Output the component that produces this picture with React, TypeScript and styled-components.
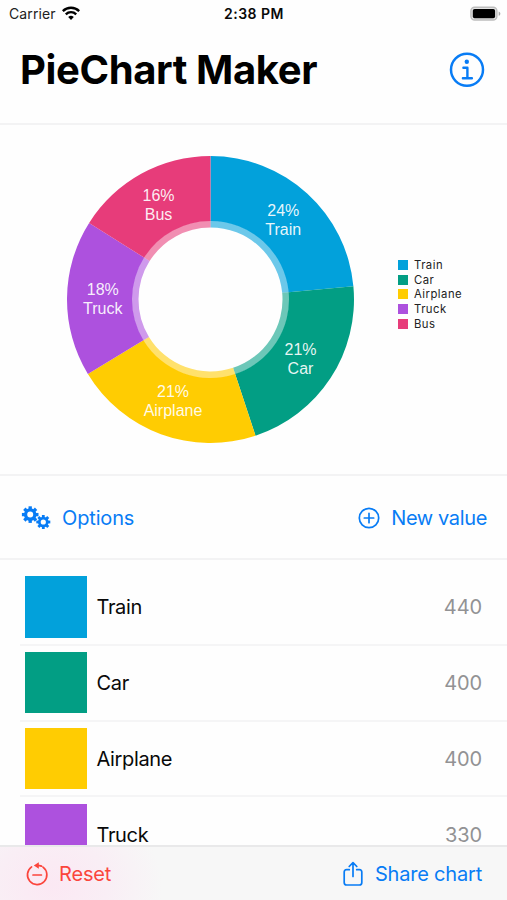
import React from "react";
import styled, { createGlobalStyle } from "styled-components";

const BLUE = "#087cf5";
const RED = "#fb453c";

const entries = [
  { name: "Train", value: 440, color: "#02a1db", tx: 283.3, ty: 216.5 },
  { name: "Car", value: 400, color: "#029e84", tx: 300.5, ty: 355 },
  { name: "Airplane", value: 400, color: "#ffcc02", tx: 173, ty: 397.3 },
  { name: "Truck", value: 330, color: "#ad51de", tx: 102.8, ty: 295 },
  { name: "Bus", value: 300, color: "#e73c7a", tx: 158.5, ty: 201.5 },
];
const total = entries.reduce((sum, e) => sum + e.value, 0);

const GlobalStyle = createGlobalStyle`
  * { box-sizing: border-box; }
  body { margin: 0; background: #fff; overflow: hidden; }
`;

const Screen = styled.main`
  width: 507px;
  height: 900px;
  display: flex;
  flex-direction: column;
  overflow: hidden;
  background: #fefefe;
  color: #090909;
  font-family: Inter, "Liberation Sans", sans-serif;
`;

const StatusBar = styled.div`
  height: 28px;
  flex: none;
  display: grid;
  grid-template-columns: 1fr auto 1fr;
  align-items: center;
  padding: 0 6px 0 9px;
`;

const Carrier = styled.div`
  display: flex;
  align-items: center;
  gap: 6px;
  font-size: 14px;
  line-height: 28px;
  letter-spacing: 0.1px;
  color: #222;

  svg { margin-top: -2px; }
`;

const Clock = styled.div`
  font-size: 14px;
  font-weight: 600;
  line-height: 28px;
  letter-spacing: 0.48px;
  margin-left: -2px;
`;

const Battery = styled.svg`
  justify-self: end;
  display: block;
  margin-top: -2px;
`;

const Header = styled.header`
  height: 97px;
  flex: none;
  display: flex;
  justify-content: space-between;
  align-items: flex-start;
  padding: 17px 22px 0 20px;
  border-bottom: 2px solid #f3f3f4;
`;

const Title = styled.h1`
  margin: 0;
  font-size: 40px;
  line-height: 50px;
  font-weight: 700;
  letter-spacing: -0.38px;
  color: #000;
`;

const InfoIcon = styled.svg`
  display: block;
  margin-top: 7px;
`;

const ChartPanel = styled.section`
  height: 351px;
  flex: none;
  display: flex;
  border-bottom: 2px solid #f3f3f4;
`;

const Donut = styled.svg`
  display: block;
  flex: none;
`;

const SliceLabel = styled.text`
  font-family: "Liberation Sans", sans-serif;
  font-size: 16px;
  fill: #fff;
  fill-opacity: 0.92;
  text-anchor: middle;
`;

const Legend = styled.ul`
  list-style: none;
  margin: 133px 0 0 18px;
  padding: 0;
`;

const LegendItem = styled.li`
  height: 14.6px;
  display: flex;
  align-items: center;
  gap: 6px;
  font-size: 11.3px;
  letter-spacing: 0.48px;
  color: #222;
`;

const Key = styled.span<{ $color: string }>`
  width: 10px;
  height: 10px;
  background: ${(p) => p.$color};
`;

const Toolbar = styled.nav`
  height: 84px;
  flex: none;
  display: flex;
  justify-content: space-between;
  align-items: center;
  padding: 1px 20px 0 21px;
  border-bottom: 2px solid #f3f3f4;
`;

const Action = styled.button<{ $color: string; $gap: number; $spacing?: number }>`
  border: 0;
  padding: 0;
  background: none;
  display: flex;
  align-items: center;
  gap: ${(p) => p.$gap}px;
  color: ${(p) => p.$color};
  font: 400 20px/28px Inter, "Liberation Sans", sans-serif;
  letter-spacing: ${(p) => p.$spacing ?? 0}px;
  white-space: nowrap;

  svg { display: block; flex: none; }
`;

const List = styled.ul`
  list-style: none;
  margin: 0;
  padding: 10px 0 0 20px;
  flex: 1;
  min-height: 0;
  overflow: hidden;
`;

const Row = styled.li`
  height: 75.8px;
  display: flex;
  align-items: center;
  padding: 0 25px 0 5px;
  border-bottom: 2px solid #f5f5f6;
  font-size: 20px;
  line-height: 24px;
`;

const Swatch = styled.span<{ $color: string }>`
  width: 61.5px;
  height: 61.5px;
  margin-right: 10px;
  background: ${(p) => p.$color};
`;

const Name = styled.span`
  flex: 1;
  padding-top: 1px;
  letter-spacing: -0.35px;
`;

const Value = styled.span`
  padding-top: 1px;
  color: #929294;
  letter-spacing: -0.1px;
`;

const Footer = styled.footer`
  height: 55px;
  flex: none;
  display: flex;
  justify-content: space-between;
  align-items: center;
  padding: 0 25px;
  border-top: 2px solid #e9e9ea;
  background: radial-gradient(ellipse 110px 90px at 52px 38px, #fbe8f3 0%, #f9eef5 50%, #f7f7f7 100%);
`;

const CX = 210.5;
const CY = 174.5;
const point = (r: number, a: number) => `${CX + r * Math.sin(a)} ${CY - r * Math.cos(a)}`;
const ring = (outer: number, inner: number, a: number, b: number) =>
  `M${point(outer, a)}A${outer} ${outer} 0 0 1 ${point(outer, b)}L${point(inner, b)}A${inner} ${inner} 0 0 0 ${point(inner, a)}Z`;

function Gear({ x, y, r, hole }: { x: number; y: number; r: number; hole: number }) {
  const body = r * 0.76;
  return (
    <g transform={`translate(${x} ${y})`}>
      <circle r={(body + hole) / 2} fill="none" stroke="currentColor" strokeWidth={body - hole} />
      {[0, 45, 90, 135, 180, 225, 270, 315].map((a) => (
        <rect key={a} x={-r * 0.2} y={-r} width={r * 0.4} height={r * 0.4} fill="currentColor" transform={`rotate(${a})`} />
      ))}
    </g>
  );
}

function DonutChart() {
  let sum = 0;
  return (
    <Donut width="380" height="348" viewBox="0 0 380 348">
      {entries.map((e) => {
        const a = (sum / total) * Math.PI * 2;
        sum += e.value;
        const b = (sum / total) * Math.PI * 2;
        return (
          <g key={e.name}>
            <path d={ring(143.5, 78.5, a, b)} fill={e.color} />
            <path d={ring(79, 72, a, b)} fill={e.color} fillOpacity="0.58" />
          </g>
        );
      })}
      {entries.map((e) => (
        <g key={e.name}>
          <SliceLabel x={e.tx} y={e.ty - 125.5}>{Math.round((e.value / total) * 100)}%</SliceLabel>
          <SliceLabel x={e.tx} y={e.ty - 106.5}>{e.name}</SliceLabel>
        </g>
      ))}
    </Donut>
  );
}

export default function App() {
  return (
    <Screen>
      <GlobalStyle />
      <StatusBar>
        <Carrier>
          <span>Carrier</span>
          <svg width="18" height="14" viewBox="0 0 18 14" fill="none" stroke="#000" strokeWidth="2.4">
            <path d="M.8 5.1a11.7 11.7 0 0 1 16.4 0" />
            <path d="M3.8 8.3a7.4 7.4 0 0 1 10.4 0" />
            <path d="M9 14 6.2 11.1a4 4 0 0 1 5.6 0Z" fill="#000" stroke="none" />
          </svg>
        </Carrier>
        <Clock>2:38 PM</Clock>
        <Battery width="31" height="15" viewBox="0 0 31 15">
          <rect x=".9" y="1.2" width="26" height="12.8" rx="3.8" fill="#e4e4e4" stroke="#bdbdbd" strokeWidth="1.4" />
          <rect x="2.8" y="3" width="22.3" height="9.2" rx="1.8" fill="#000" />
          <path d="M28.7 5.4c2.2.8 2.2 3.6 0 4.4Z" fill="#aaa" />
        </Battery>
      </StatusBar>
      <Header>
        <Title>PieChart Maker</Title>
        <InfoIcon width="36" height="36" viewBox="0 0 36 36" fill="none" stroke={BLUE}>
          <circle cx="18" cy="17.8" r="16" strokeWidth="2.5" />
          <circle cx="17.8" cy="9.8" r="2.2" fill={BLUE} stroke="none" />
          <path d="M14.4 15.7h4v10.5M13.9 26.2h9" strokeWidth="2.4" strokeLinecap="round" strokeLinejoin="round" />
        </InfoIcon>
      </Header>
      <ChartPanel>
        <DonutChart />
        <Legend>
          {entries.map((e) => (
            <LegendItem key={e.name}><Key $color={e.color} />{e.name}</LegendItem>
          ))}
        </Legend>
      </ChartPanel>
      <Toolbar>
        <Action $color={BLUE} $gap={11} $spacing={-0.15}>
          <svg width="30" height="24" viewBox="0 0 30 24">
            <Gear x={9.2} y={8.6} r={8.3} hole={3} />
            <Gear x={22.3} y={16} r={7} hole={2.6} />
          </svg>
          Options
        </Action>
        <Action $color={BLUE} $gap={11} $spacing={-0.36}>
          <svg width="22" height="22" viewBox="0 0 22 22" fill="none" stroke="currentColor" strokeWidth="1.7">
            <circle cx="11" cy="11" r="9.7" />
            <path d="M11 6.3v9.4M6.3 11h9.4" strokeLinecap="round" />
          </svg>
          New value
        </Action>
      </Toolbar>
      <List>
        {entries.slice(0, 4).map((e) => (
          <Row key={e.name}>
            <Swatch $color={e.color} />
            <Name>{e.name}</Name>
            <Value>{e.value}</Value>
          </Row>
        ))}
      </List>
      <Footer>
        <Action $color={RED} $gap={10} $spacing={-0.15}>
          <svg width="24" height="26" viewBox="0 0 24 26" fill="none" stroke="currentColor" strokeWidth="1.7" strokeLinecap="round">
            <path d="M6.6 5.9A9.7 9.7 0 1 0 18 6.1M11.5 4.3Q14.5 4.2 16.5 5.1M8 14h8.4" />
            <path d="M13.8 1.2v6.6L8.8 4.5Z" fill="currentColor" stroke="none" />
          </svg>
          Reset
        </Action>
        <Action $color={BLUE} $gap={12} $spacing={-0.2}>
          <svg width="20" height="26" viewBox="0 0 20 26" fill="none" stroke="currentColor" strokeWidth="1.7" strokeLinecap="round" strokeLinejoin="round">
            <path d="M6.3 8.7H3.6Q1.2 8.7 1.2 11v10.5Q1.2 24 3.6 24h12.8q2.4 0 2.4-2.5V11q0-2.3-2.4-2.3h-2.7M10 15.5V2M6.2 5.5 10 1.7l3.8 3.8" />
          </svg>
          Share chart
        </Action>
      </Footer>
    </Screen>
  );
}
